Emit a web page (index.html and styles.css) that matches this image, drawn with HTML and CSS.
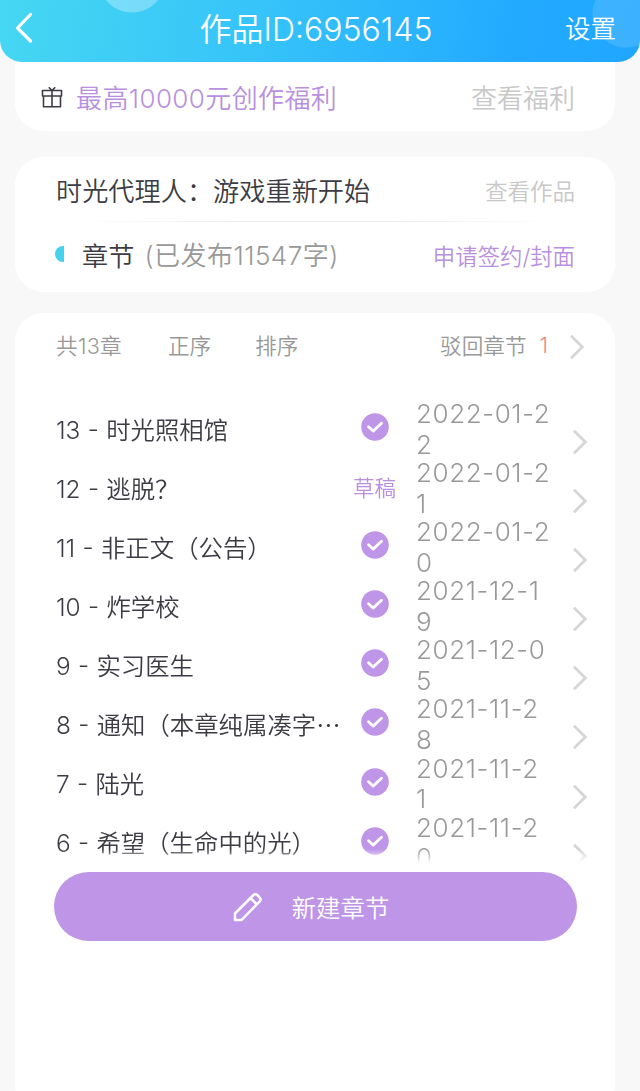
FILE: index.html
```html
<!DOCTYPE html>
<html lang="zh-CN">
<head>
  <meta charset="UTF-8">
  <title>作品ID:6956145</title>
  <link rel="stylesheet" href="styles.css">
</head>
<body>
  <svg width="0" height="0" class="defs">
    <symbol id="check" viewBox="0 0 28 28">
      <circle cx="14" cy="14" r="13.8" fill="#be95e7"/>
      <path d="M7.5 13.7l4.6 4.4 8.4-7.8" fill="none" stroke="#fff" stroke-width="2.8" stroke-linecap="round" stroke-linejoin="round"/>
    </symbol>
    <symbol id="arrow" viewBox="0 0 16 26">
      <path d="M2 1.8l11.3 11.2L2 24.2" fill="none" stroke="#d6d6d6" stroke-width="2.8"/>
    </symbol>
  </svg>

  <header class="topbar">
    <svg class="back" viewBox="0 0 20 32">
      <path d="M15.5 2.5L2.5 16l13 13" fill="none" stroke="#fff" stroke-width="3.2" stroke-linecap="round" stroke-linejoin="round"/>
    </svg>
    <h1>作品ID:6956145</h1>
    <a class="settings">设置</a>
  </header>

  <section class="card welfare">
    <svg class="gift" viewBox="0 0 22 22">
      <g fill="none" stroke="#3c3c44" stroke-width="1.6" stroke-linejoin="round">
        <path d="M1.5 4.5h19v5.5h-19zM2.5 10v10.700h17V10M11 4.500v16.200M7.800 1.300L11 4.500l3.200-3.200"/>
      </g>
    </svg>
    <span class="welfare-text">最高10000元创作福利</span>
    <a class="more">查看福利</a>
  </section>

  <section class="card book">
    <div class="book-row">
      <h2>时光代理人：游戏重新开始</h2>
      <a class="view">查看作品</a>
    </div>
    <div class="divider"></div>
    <div class="book-row">
      <i class="dot"></i>
      <h2>章节</h2>
      <span class="count">(已发布11547字)</span>
      <a class="apply">申请签约/封面</a>
    </div>
  </section>

  <section class="card chapters">
    <div class="toolbar">
      <span class="total">共13章</span>
      <span class="order">正序</span>
      <span class="sort">排序</span>
      <span class="rejected">驳回章节</span>
      <span class="num">1</span>
      <svg class="arrow"><use href="#arrow"/></svg>
    </div>

    <ul class="list">
      <li>
        <span class="name">13 - 时光照相馆</span>
        <span class="status"><svg class="check"><use href="#check"/></svg></span>
        <span class="date">2022-01-2<br>2</span>
        <svg class="arrow"><use href="#arrow"/></svg>
      </li>
      <li>
        <span class="name">12 - 逃脱？</span>
        <span class="status">草稿</span>
        <span class="date">2022-01-2<br>1</span>
        <svg class="arrow"><use href="#arrow"/></svg>
      </li>
      <li>
        <span class="name">11 - 非正文（公告）</span>
        <span class="status"><svg class="check"><use href="#check"/></svg></span>
        <span class="date">2022-01-2<br>0</span>
        <svg class="arrow"><use href="#arrow"/></svg>
      </li>
      <li>
        <span class="name">10 - 炸学校</span>
        <span class="status"><svg class="check"><use href="#check"/></svg></span>
        <span class="date">2021-12-1<br>9</span>
        <svg class="arrow"><use href="#arrow"/></svg>
      </li>
      <li>
        <span class="name">9 - 实习医生</span>
        <span class="status"><svg class="check"><use href="#check"/></svg></span>
        <span class="date">2021-12-0<br>5</span>
        <svg class="arrow"><use href="#arrow"/></svg>
      </li>
      <li>
        <span class="name">8 - 通知（本章纯属凑字⋯</span>
        <span class="status"><svg class="check"><use href="#check"/></svg></span>
        <span class="date">2021-11-2<br>8</span>
        <svg class="arrow"><use href="#arrow"/></svg>
      </li>
      <li>
        <span class="name">7 - 陆光</span>
        <span class="status"><svg class="check"><use href="#check"/></svg></span>
        <span class="date">2021-11-2<br>1</span>
        <svg class="arrow"><use href="#arrow"/></svg>
      </li>
      <li>
        <span class="name">6 - 希望（生命中的光）</span>
        <span class="status"><svg class="check"><use href="#check"/></svg></span>
        <span class="date">2021-11-2<br>0</span>
        <svg class="arrow"><use href="#arrow"/></svg>
      </li>
    </ul>

    <button class="create">
      <svg class="pencil" viewBox="0 0 30 30">
        <g fill="none" stroke="#fff" stroke-width="2.5" stroke-linejoin="round">
          <path d="M2 28v-6.5L20.5 3a2.6 2.6 0 0 1 3.7 0l2.6 2.6a2.6 2.6 0 0 1 0 3.7L8.5 28zM17.5 6l6.3 6.3"/>
        </g>
      </svg>
      <span>新建章节</span>
    </button>
  </section>
</body>
</html>
```

FILE: styles.css
```css
* {
  box-sizing: border-box;
}

body {
  margin: 0;
  height: 1091px;
  overflow: hidden;
  display: flex;
  flex-direction: column;
  background: #f8f8f8;
  color: #3c3c44;
  font-family: Inter, "Noto Sans CJK SC", sans-serif;
  font-weight: 350;
}

h1, h2 {
  margin: 0;
  font-weight: 350;
}

.defs {
  position: absolute;
}

/* top bar */
.topbar {
  flex: none;
  height: 62px;
  padding: 0 24px 4px 15px;
  display: grid;
  grid-template-columns: 60px 1fr 51px;
  align-items: center;
  border-radius: 0 0 22px 22px;
  background:
    radial-gradient(circle at 132px -21px, rgba(255, 255, 255, .3) 33px, transparent 34px),
    radial-gradient(circle at 626px 14px, rgba(255, 255, 255, .13) 33px, transparent 34px),
    linear-gradient(100deg, #45d7f2, #36c4f9 40%, #22aaff 80%, #20a6ff);
  color: #fff;
}

.back {
  width: 20px;
  height: 32px;
  margin-top: -2px;
}

.topbar h1 {
  padding: 2px 8px 0 0;
  font-size: 32px;
  line-height: 40px;
  text-align: center;
}

.settings {
  padding-bottom: 5px;
  font-size: 25.5px;
  white-space: nowrap;
}

/* cards */
.card {
  flex: none;
  margin: 0 25px 0 15px;
  padding: 0 40px 0 41px;
  background: #fff;
  border-radius: 28px;
}

.welfare {
  height: 69px;
  padding-left: 26px;
  display: flex;
  align-items: center;
  border-radius: 0 0 28px 28px;
  font-size: 26px;
}

.gift {
  width: 22px;
  height: 22px;
  margin-right: 13px;
}

.welfare-text {
  color: #b98fe0;
  letter-spacing: .4px;
}

.more {
  margin-left: auto;
  color: #c8c8c8;
}

.book {
  height: 135px;
  margin-top: 26px;
}

.book-row {
  height: 64px;
  padding-top: 1px;
  display: flex;
  align-items: center;
}

.book-row h2 {
  font-size: 26.2px;
}

.view {
  margin-left: auto;
  font-size: 22.5px;
  color: #c8c8c8;
}

.divider {
  height: 1px;
  background: linear-gradient(90deg, #fff 5%, #e9e9e9 40%, #e9e9e9 60%, #fff 95%);
}

.dot {
  width: 9px;
  height: 16px;
  margin: -2px 18px 0 -1px;
  border-radius: 8px 0 0 8px;
  background: #45d2ec;
}

.count {
  margin: -2px 0 0 10px;
  font-size: 26px;
  letter-spacing: .5px;
  color: #999;
}

.apply {
  margin-left: auto;
  font-size: 22.4px;
  color: #b98fe0;
}

/* chapter list */
.chapters {
  height: 800px;
  margin-top: 21px;
}

.toolbar {
  height: 66px;
  margin-right: -10px;
  padding-bottom: 3px;
  display: flex;
  align-items: center;
  font-size: 21.6px;
  color: #999;
}

.total {
  letter-spacing: .3px;
}

.order {
  margin-left: 46px;
}

.sort {
  margin-left: 44px;
}

.rejected {
  margin-left: auto;
}

.num {
  margin: 0 21px 0 13px;
  color: #ea8a8a;
}

.arrow {
  width: 16px;
  height: 26px;
}

.toolbar .arrow {
  margin-top: 4px;
}

.list {
  height: 464px;
  margin: 20px -30px 0 0;
  padding: 0;
  overflow: hidden;
  list-style: none;
  -webkit-mask-image: linear-gradient(#000 450px, transparent 464px);
  mask-image: linear-gradient(#000 450px, transparent 464px);
}

.list li {
  height: 59.1px;
  display: grid;
  grid-template-columns: 296px 44px 146px 16px;
  column-gap: 10px;
  align-items: center;
}

.name {
  padding-bottom: 3px;
  font-size: 24.4px;
  word-spacing: .5px;
  white-space: nowrap;
}

.status {
  height: 30px;
  margin: -5px 0 0 -19px;
  display: flex;
  align-items: center;
  justify-content: center;
  font-size: 21.6px;
  color: #b98fe0;
  white-space: nowrap;
}

.check {
  width: 28px;
  height: 28px;
}

.date {
  font-size: 26px;
  line-height: 30.5px;
  letter-spacing: .6px;
  color: #999;
}

.list .arrow {
  margin-top: 25px;
}

.create {
  width: 523px;
  height: 69px;
  margin: 9px 0 0 -2px;
  padding: 0;
  display: flex;
  align-items: center;
  justify-content: center;
  border: none;
  border-radius: 35px;
  background: #be95e7;
  color: #fff;
  font-family: inherit;
  font-size: 24.4px;
  font-weight: 350;
}

.pencil {
  width: 30px;
  height: 30px;
  margin: 0 29px 0 -9px;
}
```
